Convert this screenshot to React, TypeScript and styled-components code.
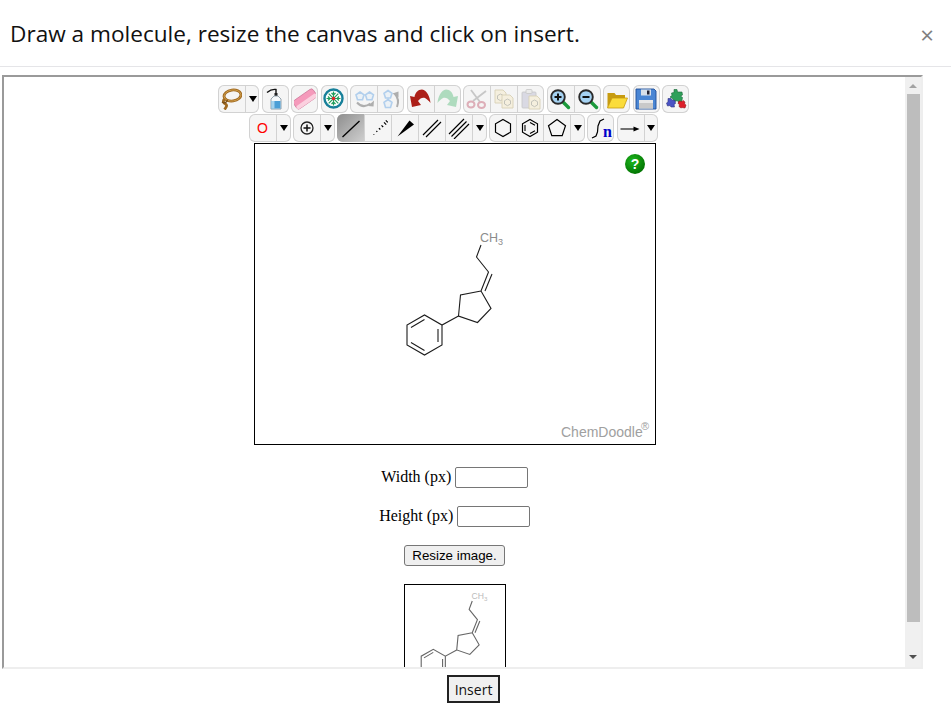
import { createGlobalStyle, styled } from "styled-components";
import type { ReactNode } from "react";

const Global = createGlobalStyle`
    html, body {
        margin: 0;
        padding: 0;
        background: #fff;
        overflow: hidden;
    }
`;

const Dialog = styled.div`
    width: 951px;
    height: 714px;
    display: flex;
    flex-direction: column;
    overflow: hidden;
    font-family: "Open Sans", sans-serif;
`;

const Header = styled.header`
    height: 67px;
    box-sizing: border-box;
    flex: none;
    display: flex;
    align-items: center;
    justify-content: space-between;
    padding: 0 17px 0 10px;
    border-bottom: 1px solid #e5e5e8;
`;

const Title = styled.h1`
    margin: 0;
    font-size: 22.6px;
    font-weight: 400;
    color: #111;
`;

const Close = styled.span`
    font-size: 24px;
    line-height: 24px;
    color: #808080;
    margin-top: 3px;
`;

const Frame = styled.div`
    flex: none;
    width: 921px;
    height: 594px;
    box-sizing: border-box;
    margin: 8px 0 0 2px;
    display: flex;
    border-style: solid;
    border-width: 2px;
    border-color: #9a9a9a #eee #eee #9a9a9a;
`;

const Content = styled.div`
    flex: 1;
    min-width: 0;
    box-sizing: border-box;
    padding: 8px 0 0 1px;
    overflow: hidden;
    display: flex;
    flex-direction: column;
    align-items: center;
`;

const Scrollbar = styled.div`
    flex: none;
    width: 16px;
    background: #f0f0f0;
    display: flex;
    flex-direction: column;
    align-items: center;
`;

const ScrollArrow = styled.div<{ $down?: boolean; $dark?: boolean }>`
    width: 0;
    height: 0;
    border-left: 4px solid transparent;
    border-right: 4px solid transparent;
    ${(p) => (p.$down ? "border-top" : "border-bottom")}: 4px solid ${(p) => (p.$dark ? "#505050" : "#a3a3a3")};
    margin: ${(p) => (p.$down ? "33px 0 0" : "7px 0 0")};
`;

const ScrollThumb = styled.div`
    width: 13px;
    height: 528px;
    background: #bdbdbd;
    margin-top: 6px;
`;

const ToolRow = styled.div`
    display: flex;
    gap: 2.5px;
    height: 28px;
    margin-bottom: 1px;
    padding-right: 3px;
`;

const ToolGroup = styled.div`
    display: flex;
    position: relative;
    background: #f5f5f5;
    border-radius: 6px;
    box-shadow: inset 0 0 0 1px #d2d2d2;
    overflow: hidden;
`;

const ToolButton = styled.div<{ $active?: boolean; $faded?: boolean }>`
    width: 27px;
    height: 28px;
    box-sizing: border-box;
    display: flex;
    align-items: center;
    justify-content: center;
    font-family: "Liberation Sans", sans-serif;
    font-size: 14px;
    color: #f00;
    ${(p) => p.$active && "background: linear-gradient(135deg, #8e8e8e, #cfcfcf);"}
    & + & {
        border-left: 1px solid #d2d2d2;
    }
    & > svg {
        display: block;
        opacity: ${(p) => (p.$faded ? 0.36 : 1)};
    }
`;

const CaretButton = styled.div`
    width: 14.5px;
    height: 28px;
    box-sizing: border-box;
    border-left: 1px solid #d2d2d2;
    display: flex;
    align-items: center;
    justify-content: center;
`;

const Caret = styled.span`
    width: 0;
    height: 0;
    border-left: 4px solid transparent;
    border-right: 4px solid transparent;
    border-top: 6px solid #000;
`;

const Sketcher = styled.div`
    width: 402px;
    height: 302px;
    flex: none;
    box-sizing: border-box;
    border: 1px solid #000;
    background: #fff;
`;

const SketcherDrawing = styled.svg`
    display: block;
    width: 400px;
    height: 300px;
`;

const SizeRow = styled.label<{ $top: number }>`
    display: flex;
    align-items: center;
    gap: 3.5px;
    margin-top: ${(p) => p.$top}px;
    padding-right: 1px;
    font-family: "Liberation Serif", serif;
    font-size: 16px;
    color: #000;
`;

const SizeText = styled.span`
    margin-bottom: 2px;
`;

const SizeInput = styled.input`
    width: 73px;
    height: 21px;
    box-sizing: border-box;
    border: 1px solid #767676;
    border-radius: 2px;
    padding: 0;
    background: #fff;
`;

const ResizeButton = styled.button`
    width: 101px;
    height: 21px;
    flex: none;
    box-sizing: border-box;
    margin: 18px 1px 0 0;
    padding: 0;
    border: 1px solid #767676;
    border-radius: 3px;
    background: #efefef;
    font-family: "Liberation Sans", sans-serif;
    font-size: 13.33px;
    color: #000;
`;

const Preview = styled.div`
    width: 102px;
    height: 102px;
    flex: none;
    box-sizing: border-box;
    margin-top: 18px;
    border: 1px solid #000;
    background: #fff;
`;

const PreviewDrawing = styled.svg`
    display: block;
    width: 100px;
    height: 100px;
`;

const Footer = styled.footer`
    flex: 1;
    display: flex;
    justify-content: center;
    padding: 6px 4px 0 0;
`;

const InsertButton = styled.button`
    width: 53px;
    height: 28px;
    box-sizing: border-box;
    padding: 0;
    border: 2px solid #222;
    background: #f0f0f0;
    font-family: "Open Sans", sans-serif;
    font-size: 14px;
    color: #111;
`;

function Icon({ children }: { children: ReactNode }) {
    return (
        <svg width="22" height="22" viewBox="0 0 22 22" fill="none">
            {children}
        </svg>
    );
}

const Lasso = () => (
    <Icon>
        <ellipse cx="12.500" cy="7.500" rx="8.500" ry="5.500" transform="rotate(-8 12.500 7.500)" stroke="#a06a22" strokeWidth="2.800" />
        <ellipse cx="12.500" cy="7.500" rx="8.500" ry="5.500" transform="rotate(-8 12.500 7.500)" stroke="#d3a24f" strokeWidth=".9" />
        <path d="M4.500 11c-2 2-1 4 1 5 2 1 1 3-1 5.500" stroke="#a06a22" strokeWidth="2.800" />
        <path d="M2 14c2 1.500 4.500 1 5.500-2" stroke="#7b5018" strokeWidth="1.500" />
    </Icon>
);

const Bottle = () => (
    <Icon>
        <path d="M3 4.500C6 2 9 1 12 1.500V6" stroke="#111" strokeWidth="1.400" />
        <rect x="10.500" y="5" width="3" height="3" fill="#222" />
        <path d="M10 8h4l3 3v10H7V11z" fill="#f6f9fb" stroke="#8a9aa5" strokeWidth=".9" />
        <path d="M7.500 13h9v7.500h-9z" fill="#4c9fd6" />
        <path d="M7.500 13h3v7.500h-3z" fill="#a5d3ee" />
    </Icon>
);

const Eraser = () => (
    <Icon>
        <g transform="rotate(-35 11 11)">
            <rect x="-1" y="6" width="24" height="10" rx="2.500" fill="#f59abb" stroke="#d07f9f" strokeWidth=".8" />
            <rect x="-1" y="12" width="24" height="4" rx="2" fill="#fbd0df" />
        </g>
    </Icon>
);

const Snowflake = () => (
    <Icon>
        <circle cx="10.500" cy="10.500" r="9" fill="#fff" stroke="#17809a" strokeWidth="2.400" />
        <path
            d="M10.500 3.500v14M3.500 10.500h14M5.700 5.700l9.600 9.600M15.300 5.700l-9.600 9.600M8.500 5l2 2 2-2M8.500 16l2-2 2 2M5 8.500l2 2-2 2M16 8.500l-2 2 2 2"
            stroke="#1f9d5c"
            strokeWidth="1.200"
        />
        <circle cx="10.500" cy="10.500" r="1.800" fill="#e5242a" />
    </Icon>
);

const FlipH = () => (
    <Icon>
        <path d="M7 4l4 2.800-1.500 5h-5L3 6.800zM16.500 4l4 2.800-1.500 5h-5l-1.500-5z" fill="#dcebf8" stroke="#3d8fe0" strokeWidth="1.600" />
        <path d="M4 14.500c4 4.500 9 4.500 13.500 1" stroke="#333" strokeWidth="2" />
        <path d="M21 12.500l-.5 6-5.500-.5z" fill="#333" />
    </Icon>
);

const FlipV = () => (
    <Icon>
        <path d="M8 2.500l4 2.800-1.500 4.700h-5L4 5.300zM8 11.500l4 2.800-1.500 5.200h-5L4 14.300z" fill="#dcebf8" stroke="#3d8fe0" strokeWidth="1.600" />
        <path d="M15 6c3.500 4 4 8 2 13" stroke="#333" strokeWidth="2" />
        <path d="M12.500 5.500l6-2v6z" fill="#333" />
    </Icon>
);

const Undo = () => (
    <Icon>
        <path d="M1 8l2 11 9-2-3-4c2-3 5-4 7-3s4 3 5.500 5C21 9 18 2 13 1.500 9 1.500 6 5 5.500 9z" fill="#ac1f18" />
    </Icon>
);

const Redo = () => (
    <Icon>
        <path d="M21 8l-2 11-9-2 3-4c-2-3-5-4-7-3s-4 3-5.500 5C1 9 4 2 9 1.500c4 0 7 3.500 7.500 7.500z" fill="#34b060" />
    </Icon>
);

const Scissors = () => (
    <Icon>
        <path d="M7 13L20 3M14 14L5 2" stroke="#777" strokeWidth="1.800" />
        <ellipse cx="5" cy="16.500" rx="3.500" ry="3" stroke="#b5334e" strokeWidth="2" />
        <ellipse cx="15.500" cy="17" rx="3.500" ry="3" stroke="#b5334e" strokeWidth="2" />
    </Icon>
);

const Sheet = ({ x, y }: { x: number; y: number }) => (
    <g transform={`translate(${x} ${y})`}>
        <path d="M0 0h8l3 3v10H0z" fill="#f5e7b8" stroke="#a8924a" strokeWidth=".9" />
        <path d="M5.500 4l3 1.700v3.300l-3 1.700-3-1.700V5.700z" stroke="#5e5e48" strokeWidth=".9" />
    </g>
);

const Copy = () => (
    <Icon>
        <Sheet x={2} y={2} />
        <Sheet x={9} y={7} />
    </Icon>
);

const Paste = () => (
    <Icon>
        <rect x="2" y="4" width="14" height="16" rx="1" fill="#a9a9c4" stroke="#777" strokeWidth=".8" />
        <rect x="6" y="1.500" width="6" height="4" rx="1" fill="#d8d8d8" stroke="#777" strokeWidth=".8" />
        <Sheet x={9} y={8} />
    </Icon>
);

const Magnifier = ({ plus }: { plus?: boolean }) => (
    <Icon>
        <path d="M13.500 13.500l6 6" stroke="#1c9a3c" strokeWidth="3.400" strokeLinecap="round" />
        <circle cx="9" cy="9" r="6.800" fill="#a5d2f2" stroke="#2b2b2b" strokeWidth="1.900" />
        <path d={plus ? "M5.500 9h7M9 5.500v7" : "M5.500 9h7"} stroke="#111" strokeWidth="2" />
    </Icon>
);

const Folder = () => (
    <Icon>
        <path d="M1.500 20V5h7l1.500 2h9v4H6z" fill="#c79b10" />
        <path d="M1.500 20l4.500-10h15.500l-4 10z" fill="#fbdc3a" stroke="#c79b10" strokeWidth=".8" />
    </Icon>
);

const Floppy = () => (
    <Icon>
        <path d="M1 1h18l2 2v18H1z" fill="#4a86d4" stroke="#1f4f99" strokeWidth=".9" />
        <rect x="6" y="1.500" width="10" height="6" fill="#d8e0ea" />
        <rect x="12" y="2.500" width="2.500" height="4" fill="#223" />
        <rect x="4" y="12" width="14" height="8.500" fill="#e8e8e8" />
        <rect x="4" y="15" width="14" height="5.500" fill="#c9c9c9" />
    </Icon>
);

const Puzzle = () => (
    <Icon>
        <path d="M9 1.500h3l.5 2.500H17l.5 3-2 1 2 1.500-1 5h-3l-1-2-3 1-2-3L5 9l2-1.500L6.500 5l2.500-.5z" fill="#2fa05a" stroke="#1c6a3b" strokeWidth=".6" />
        <path d="M3 10.500h3l1 1.500 3 .5.500 3-1.500 1 .5 2.500H6l-1-1.500-2.500.5L1.500 15l1.500-1z" fill="#4a53c5" stroke="#2f3580" strokeWidth=".6" />
        <path d="M14 13l3 .5 1-1 2 1.500-.5 2 1.500 1-1 3-3-.5-1 .5-2-1.500.5-2-1.500-1z" fill="#dd1f2a" stroke="#98181c" strokeWidth=".6" />
    </Icon>
);

const PlusCircle = () => (
    <Icon>
        <circle cx="11" cy="11" r="6" stroke="#222" strokeWidth="1.300" />
        <path d="M7.500 11h7M11 7.500v7" stroke="#111" strokeWidth="1.500" />
    </Icon>
);

const SingleBond = () => (
    <Icon>
        <path d="M2.500 20L19.500 4" stroke="#000" strokeWidth="1.300" />
    </Icon>
);

const DashedBond = () => (
    <Icon>
        <path d="M6.500 17.500h.8M9.400 14l.9.900M11.900 11.100l1.400 1.400M14.500 8.300l1.700 1.700M17 5.400l2.200 2.200M18.800 3.300l2 2" stroke="#000" strokeWidth="1.200" />
    </Icon>
);

const WedgeBond = () => (
    <Icon>
        <path d="M3.500 19.500L15.500 3.500l4.500 4z" fill="#000" />
    </Icon>
);

const DoubleBond = () => (
    <Icon>
        <path d="M2 18L17 3M5 20L20 5" stroke="#000" strokeWidth="1.200" />
    </Icon>
);

const TripleBond = () => (
    <Icon>
        <path d="M1 17L16 2M3.500 19.500l15-15M6 22L21 7" stroke="#000" strokeWidth="1.200" />
    </Icon>
);

const Hexagon = ({ inner }: { inner?: boolean }) => (
    <Icon>
        <path d="M11 2.500l7.500 4.300v8.400L11 19.500l-7.500-4.300V6.800z" stroke="#000" strokeWidth="1.200" />
        {inner && <path d="M6 8v6M11 5.500l5 2.800M16 13.800L11 16.500" stroke="#000" strokeWidth="1.100" />}
    </Icon>
);

const Pentagon = () => (
    <Icon>
        <path d="M11 2.500l8.500 6.200-3.300 10H5.800l-3.300-10z" stroke="#000" strokeWidth="1.200" />
    </Icon>
);

const SgroupN = styled.text`
    font-family: "Liberation Serif", serif;
    font-weight: 700;
    font-size: 16px;
    fill: #0000c8;
`;

const Bracket = () => (
    <Icon>
        <path d="M2 21l4-2 1.500-4 .5-6 2-5 4-2" stroke="#000" strokeWidth="1.200" />
        <SgroupN x="13" y="20.300">n</SgroupN>
    </Icon>
);

const Arrow = () => (
    <Icon>
        <path d="M1.500 12h14" stroke="#444" strokeWidth="1.300" />
        <path d="M14.500 9.500l6 2.500-6 2.500z" fill="#000" />
    </Icon>
);

const Help = styled.text`
    font-family: "Liberation Sans", sans-serif;
    font-weight: 700;
    font-size: 14px;
    fill: #fff;
`;

const Label = styled.text<{ $size: number; $tone?: string }>`
    font-family: "Liberation Sans", sans-serif;
    font-size: ${(p) => p.$size}px;
    fill: ${(p) => p.$tone ?? "#a0a0a0"};
`;

function Molecule({ color, width, labelTone }: { color: string; width: number; labelTone: string }) {
    return (
        <>
            <g stroke={color} strokeWidth={width} fill="none">
                <path d="M481 245L476.500 257L488.500 272L481 291L491 308.500L477.500 322.500L458.500 316L460.500 295L481 291" />
                <path d="M492 274L485 291" />
                <path d="M458.500 316L442 325L424.500 315L407 325V345L424.500 355L442 345V325" />
                <path d="M411 327.500L424.500 319.500M411 342.500L424.500 350.500M438 329V342" />
            </g>
            <Label $size={12.500} $tone={labelTone} x="480" y="242">CH</Label>
            <Label $size={9} $tone={labelTone} x="498" y="244.500">3</Label>
        </>
    );
}

export default function App() {
    return (
        <Dialog>
            <Global />
            <Header>
                <Title>Draw a molecule, resize the canvas and click on insert.</Title>
                <Close>×</Close>
            </Header>
            <Frame>
                <Content>
                    <ToolRow>
                        <ToolGroup>
                            <ToolButton><Lasso /></ToolButton>
                            <CaretButton><Caret /></CaretButton>
                        </ToolGroup>
                        <ToolGroup><ToolButton><Bottle /></ToolButton></ToolGroup>
                        <ToolGroup><ToolButton><Eraser /></ToolButton></ToolGroup>
                        <ToolGroup><ToolButton><Snowflake /></ToolButton></ToolGroup>
                        <ToolGroup>
                            <ToolButton $faded><FlipH /></ToolButton>
                            <ToolButton $faded><FlipV /></ToolButton>
                        </ToolGroup>
                        <ToolGroup>
                            <ToolButton><Undo /></ToolButton>
                            <ToolButton $faded><Redo /></ToolButton>
                        </ToolGroup>
                        <ToolGroup>
                            <ToolButton $faded><Scissors /></ToolButton>
                            <ToolButton $faded><Copy /></ToolButton>
                            <ToolButton $faded><Paste /></ToolButton>
                        </ToolGroup>
                        <ToolGroup>
                            <ToolButton><Magnifier plus /></ToolButton>
                            <ToolButton><Magnifier /></ToolButton>
                        </ToolGroup>
                        <ToolGroup><ToolButton><Folder /></ToolButton></ToolGroup>
                        <ToolGroup><ToolButton><Floppy /></ToolButton></ToolGroup>
                        <ToolGroup><ToolButton><Puzzle /></ToolButton></ToolGroup>
                    </ToolRow>
                    <ToolRow>
                        <ToolGroup>
                            <ToolButton>O</ToolButton>
                            <CaretButton><Caret /></CaretButton>
                        </ToolGroup>
                        <ToolGroup>
                            <ToolButton><PlusCircle /></ToolButton>
                            <CaretButton><Caret /></CaretButton>
                        </ToolGroup>
                        <ToolGroup>
                            <ToolButton $active><SingleBond /></ToolButton>
                            <ToolButton><DashedBond /></ToolButton>
                            <ToolButton><WedgeBond /></ToolButton>
                            <ToolButton><DoubleBond /></ToolButton>
                            <ToolButton><TripleBond /></ToolButton>
                            <CaretButton><Caret /></CaretButton>
                        </ToolGroup>
                        <ToolGroup>
                            <ToolButton><Hexagon /></ToolButton>
                            <ToolButton><Hexagon inner /></ToolButton>
                            <ToolButton><Pentagon /></ToolButton>
                            <CaretButton><Caret /></CaretButton>
                        </ToolGroup>
                        <ToolGroup><ToolButton><Bracket /></ToolButton></ToolGroup>
                        <ToolGroup>
                            <ToolButton><Arrow /></ToolButton>
                            <CaretButton><Caret /></CaretButton>
                        </ToolGroup>
                    </ToolRow>
                    <Sketcher>
                        <SketcherDrawing viewBox="255 144 400 300">
                            <defs>
                                <radialGradient id="helpBall" cx="0.4" cy="0.35" r="0.7">
                                    <stop offset="0" stopColor="#1fb81f" />
                                    <stop offset="1" stopColor="#007000" />
                                </radialGradient>
                            </defs>
                            <circle cx="635" cy="164" r="10" fill="url(#helpBall)" />
                            <Help x="635" y="169" textAnchor="middle">?</Help>
                            <Molecule color="#1c1c1c" width={1.100} labelTone="#8c8c8c" />
                            <Label $size={14} x="561" y="437">ChemDoodle</Label>
                            <Label $size={11} x="641" y="430">®</Label>
                        </SketcherDrawing>
                    </Sketcher>
                    <SizeRow $top={22}><SizeText>Width (px)</SizeText><SizeInput /></SizeRow>
                    <SizeRow $top={18}><SizeText>Height (px)</SizeText><SizeInput /></SizeRow>
                    <ResizeButton>Resize image.</ResizeButton>
                    <Preview>
                        <PreviewDrawing viewBox="383.500 221.800 145 145">
                            <Molecule color="#666" width={1.600} labelTone="#bbb" />
                        </PreviewDrawing>
                    </Preview>
                </Content>
                <Scrollbar>
                    <ScrollArrow />
                    <ScrollThumb />
                    <ScrollArrow $down $dark />
                </Scrollbar>
            </Frame>
            <Footer>
                <InsertButton>Insert</InsertButton>
            </Footer>
        </Dialog>
    );
}
